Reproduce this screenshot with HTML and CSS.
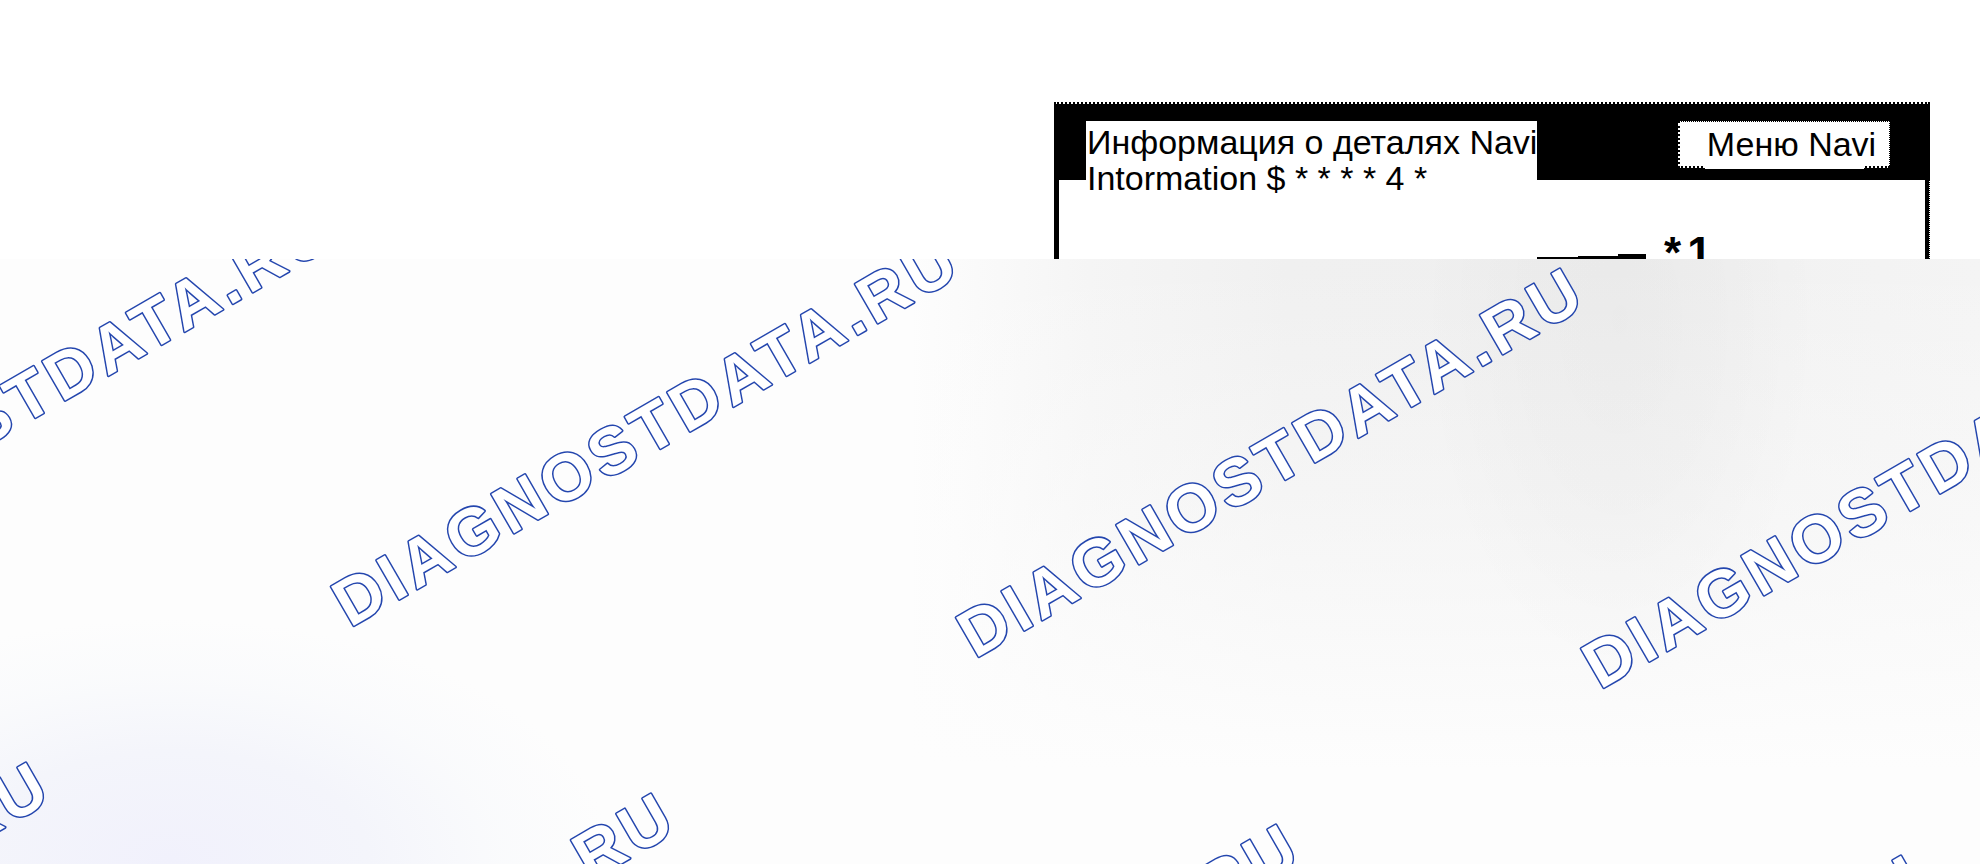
FILE: index.html
```html
<!DOCTYPE html>
<html lang="ru">
<head>
<meta charset="utf-8">
<meta name="viewport" content="width=device-width, initial-scale=1">
<title>Информация о деталях Navi</title>
<link rel="stylesheet" href="styles.css">
</head>
<body>
<main class="page">
  <section class="screen">
    <div class="panel">
      <header class="panel-header">
        <h1 class="title">Информация о деталях Navi<br>Intormation $ * * * * 4 *</h1>
        <button class="menu-button" type="button">Меню Navi</button>
      </header>
      <div class="panel-body">
        <svg class="pointer" width="109" height="5" viewBox="0 0 109 5" aria-hidden="true">
          <path d="M0 3H41V2H81V0H109V5H0Z"/>
        </svg>
        <div class="mark"><span>*</span><span>1</span></div>
      </div>
    </div>
  </section>
  <section class="backdrop">
    <svg class="watermarks" width="100%" height="100%">
      <g class="watermark">
        <text transform="translate(-275 338) rotate(-30)">DIAGNOSTDATA.RU</text>
        <text transform="translate(350 369) rotate(-30)">DIAGNOSTDATA.RU</text>
        <text transform="translate(975 400) rotate(-30)">DIAGNOSTDATA.RU</text>
        <text transform="translate(1600 431) rotate(-30)">DIAGNOSTDATA.RU</text>
        <text transform="translate(-559 894) rotate(-30)">DIAGNOSTDATA.RU</text>
        <text transform="translate(66 925) rotate(-30)">DIAGNOSTDATA.RU</text>
        <text transform="translate(691 956) rotate(-30)">DIAGNOSTDATA.RU</text>
        <text transform="translate(1316 987) rotate(-30)">DIAGNOSTDATA.RU</text>
      </g>
    </svg>
  </section>
</main>
</body>
</html>
```
FILE: styles.css
```css
* {
  box-sizing: border-box;
}

body {
  margin: 0;
  background: #fff;
  color: #000;
  font-family: "Liberation Sans", Arial, sans-serif;
}

.page {
  display: flex;
  flex-direction: column;
  height: 100vh;
  overflow: hidden;
}

.screen {
  display: flex;
  justify-content: flex-end;
  padding: 102px 50px 0 0;
}

.panel {
  flex: 0 1 876px;
  border-top: 2px dotted #000;
}

.panel-header {
  display: flex;
  justify-content: space-between;
  align-items: flex-start;
  height: 76px;
  padding: 17px 40px 0 32px;
  background: #000;
}

.title {
  margin: 0;
  padding: 3px 0 1px 1px;
  background: #fff;
  font-size: 34px;
  font-weight: 400;
  line-height: 36px;
  white-space: nowrap;
}

.menu-button {
  position: relative;
  width: 212px;
  height: 47px;
  padding: 0 0 0 14px;
  border: 1px dotted #000;
  border-bottom-width: 2px;
  border-left-width: 2px;
  background: #fff;
  color: #000;
  font: inherit;
  font-size: 34px;
  line-height: 40px;
  white-space: nowrap;
}

.menu-button::after {
  content: "";
  position: absolute;
  right: 25px;
  bottom: -3px;
  left: 25px;
  height: 3px;
  background: #fff;
}

.panel-body {
  display: flex;
  align-items: flex-end;
  gap: 18px;
  height: 79px;
  padding-left: 478px;
  border-left: 5px solid #000;
  border-right: 1px dotted #000;
  background: linear-gradient(#000, #000) right / 4px 100% no-repeat;
  overflow: hidden;
}

.pointer {
  flex: none;
}

.mark {
  display: flex;
  gap: 6px;
  height: 28px;
  font-size: 44px;
  font-weight: 700;
  line-height: 44px;
}

.backdrop {
  flex: 1;
  min-height: 0;
  overflow: hidden;
  background:
    radial-gradient(ellipse 440px 240px at 170px 600px, #f1f1fc 0%, #f4f5fb 45%, rgba(249, 250, 252, 0.8) 75%, rgba(253, 253, 253, 0) 100%),
    radial-gradient(ellipse 200px 360px at 1620px 60px, rgba(0, 0, 0, 0.025) 0%, rgba(0, 0, 0, 0.015) 50%, rgba(0, 0, 0, 0) 100%),
    linear-gradient(to bottom, rgba(253, 253, 253, 0) 0, rgba(253, 253, 253, 0.4) 240px, #fdfdfd 510px),
    linear-gradient(to right, #fdfdfd 46%, #f5f5f5 55%, #f0f0f0 65%, #efefef 82%, #f2f2f2 90%, #f4f4f4 100%);
}

.watermarks {
  display: block;
}

.watermark {
  fill: #fff;
  stroke: #2446ae;
  stroke-width: 3px;
  stroke-linejoin: round;
  paint-order: stroke;
  font-size: 66px;
  font-weight: 700;
  letter-spacing: 5px;
}
```
